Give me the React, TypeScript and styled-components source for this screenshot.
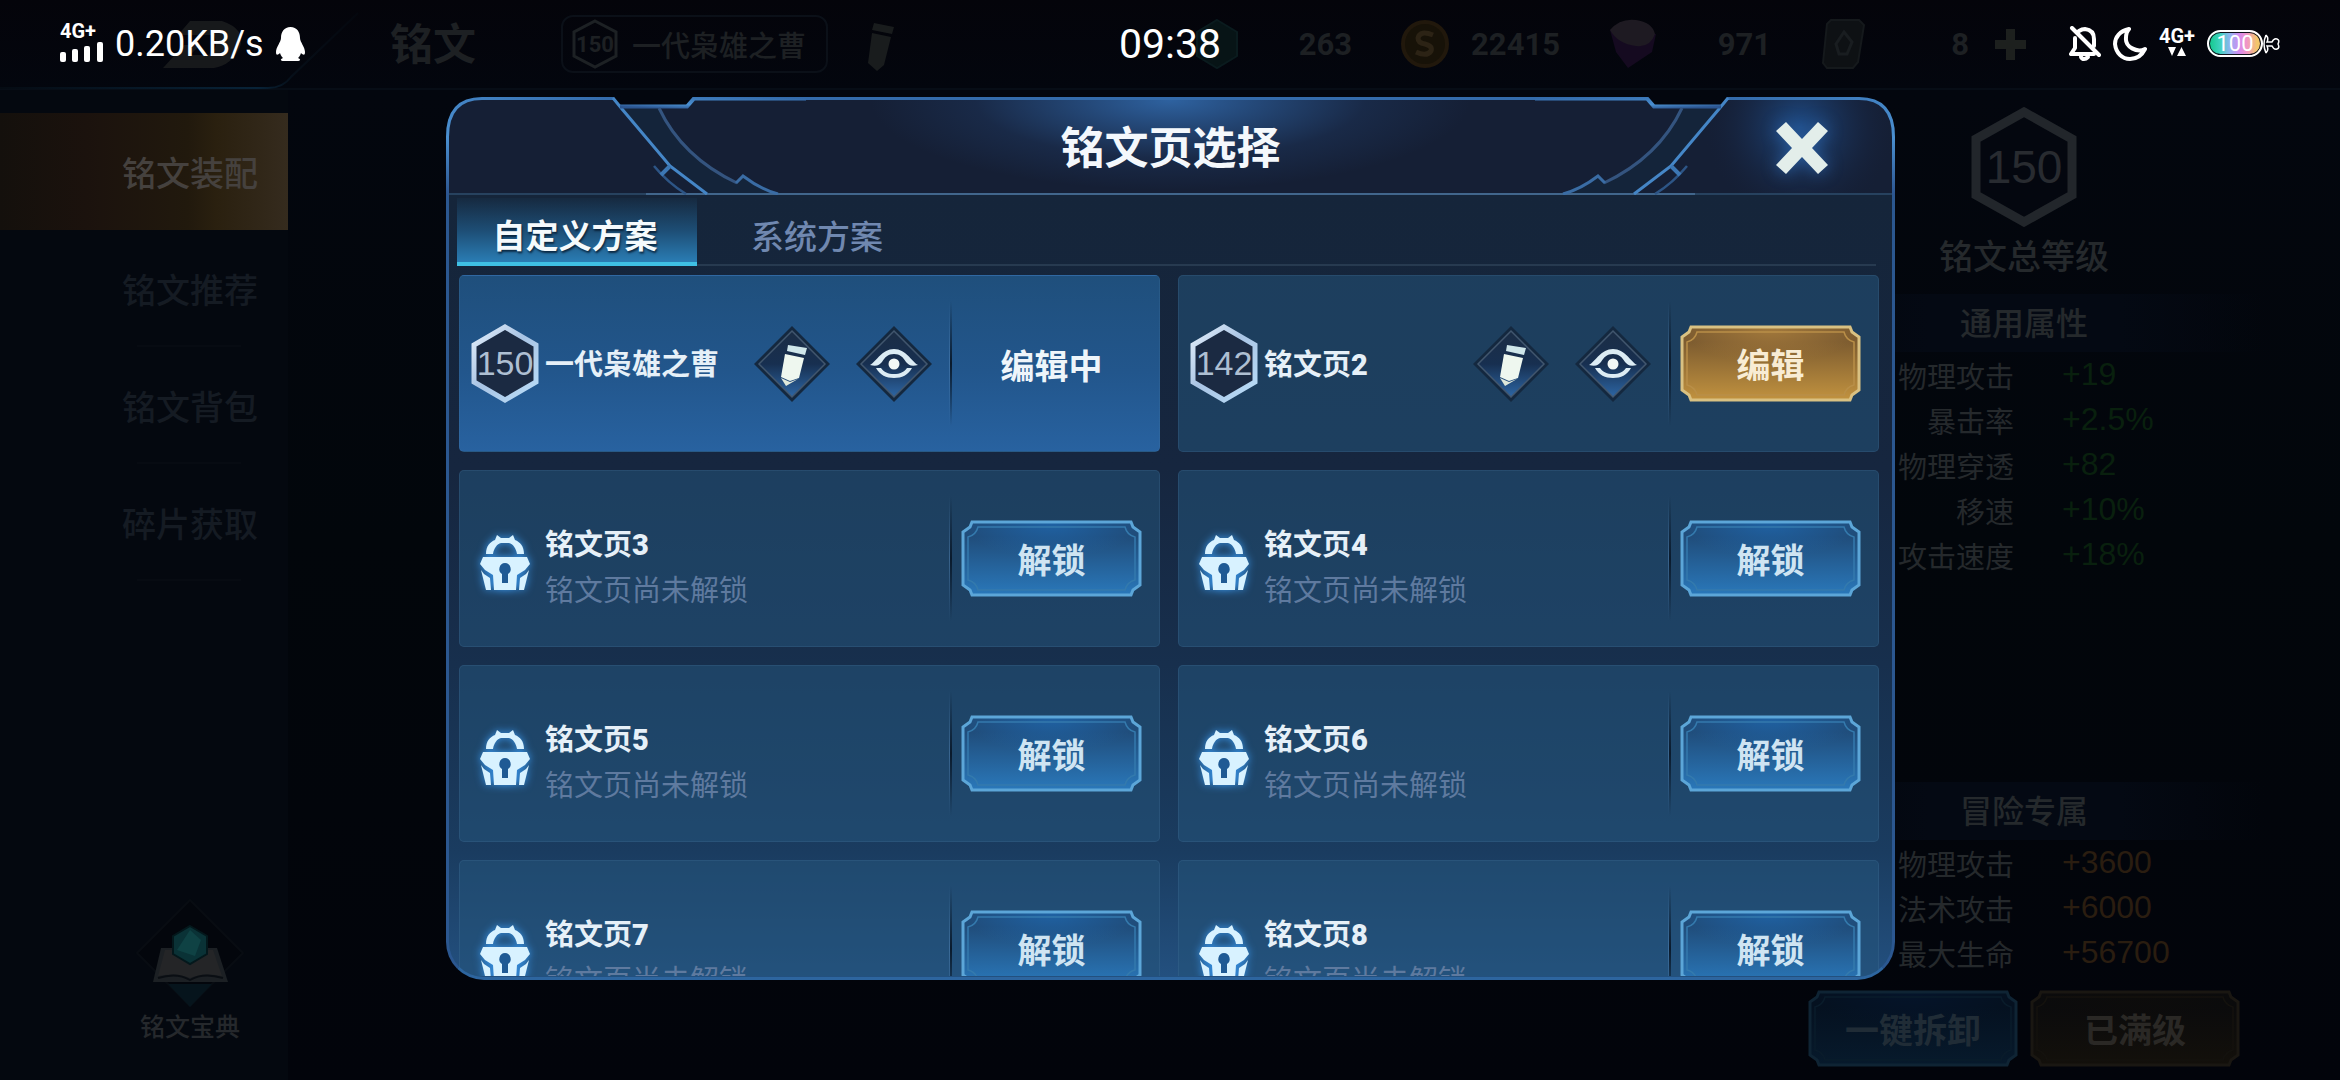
import React from "react";
import styled, { createGlobalStyle, css } from "styled-components";

const GlobalStyle = createGlobalStyle`
  *, *::before, *::after { box-sizing: border-box; }
  html, body { margin: 0; background: #02050b; }
  body {
    font-family: "Roboto", "Noto Sans CJK SC", sans-serif;
    font-weight: 500;
    color: #fff;
    overflow: hidden;
  }
  button { font: inherit; color: inherit; border: 0; padding: 0; background: none; cursor: pointer; }
  svg { display: block; flex: none; }
  ul, dl, dd, h1, h2, p { margin: 0; padding: 0; list-style: none; font-weight: inherit; }
`;

/* ---------- game page behind the dialog ---------- */

const Page = styled.div`
  position: relative;
  min-height: 100vh;
  display: flex;
  flex-direction: column;
  background: linear-gradient(180deg, #04040a 0, #03060e 90px, #02060b 50%, #02040b 100%);
`;

const TopBar = styled.header`
  height: 90px;
  display: flex;
  align-items: center;
  padding-right: 314px;
  border-bottom: 2px solid #070d16;
  color: #1d2023;
`;

const BackButton = styled.button`
  width: 370px;
  height: 90px;
`;

const PageTitle = styled.h1`
  width: 191px;
  padding: 2px 0 0 20px;
  font-size: 43px;
  line-height: 58px;
  font-weight: 700;
`;

const PlanTag = styled.div`
  width: 267px;
  height: 58px;
  display: flex;
  align-items: center;
  gap: 14px;
  padding-left: 9px;
  border: 2px solid #0b1018;
  border-radius: 12px;
  font-size: 29px;
`;

const RenameButton = styled.button`
  margin: 10px 0 0 36px;
`;

const Resources = styled.ul`
  margin-left: auto;
  display: flex;
  gap: 48px;
`;

const Resource = styled.li<{ $width: number }>`
  width: ${(p) => p.$width}px;
  height: 58px;
  display: flex;
  align-items: center;
  justify-content: space-between;
  font-size: 31px;
  font-weight: 700;
`;

const AddButton = styled.button`
  margin-left: 26px;
`;

const Main = styled.main`
  flex: 1;
  display: flex;
  justify-content: space-between;
`;

const SideNav = styled.nav`
  width: 288px;
  display: flex;
  flex-direction: column;
  padding: 23px 0 32px;
  background: #04080f;
`;

const NavItem = styled.button<{ $active?: boolean }>`
  height: 117px;
  padding-right: 30px;
  text-align: right;
  font-size: 34px;
  color: ${(p) => (p.$active ? "#45413e" : "#151b23")};
  background: ${(p) =>
    p.$active
      ? "linear-gradient(90deg, #14100c 0, #1b120d 30%, #21190d 65%, #2a200f 75%, #352b1e 100%)"
      : "linear-gradient(#070b12, #070b12) 137px 100% / 104px 2px no-repeat"};
`;

const Codex = styled.button`
  margin: auto 0 0 92px;
  display: flex;
  flex-direction: column;
  align-items: center;
  font-size: 25px;
  line-height: 40px;
  color: #25282c;
`;

const StatsPanel = styled.aside`
  width: 632px;
  display: flex;
  flex-direction: column;
  align-items: center;
  padding: 17px 0 13px;
  color: #25292c;
`;

const TotalLevel = styled.div`
  display: grid;
  place-items: center;
  font-family: "Liberation Sans", sans-serif;
  font-weight: 400;
  font-size: 46px;
  color: #282b30;

  > * { grid-area: 1 / 1; }
`;

const TotalLabel = styled.p`
  margin: 6px 0 13px;
  font-size: 34px;
  line-height: 48px;
`;

const StatGroup = styled.section<{ $bottom?: boolean }>`
  width: 100%;
  ${(p) => p.$bottom && css`margin-top: auto;`}
`;

const StatHeading = styled.h2`
  margin: 0 76px;
  height: 58px;
  font-size: 32px;
  line-height: 60px;
  text-align: center;
  background: linear-gradient(90deg, transparent, #040913 30%, #040913 70%, transparent);
`;

const StatRow = styled.div`
  display: grid;
  grid-template-columns: 306px 1fr;
  column-gap: 48px;
  height: 45px;
  align-items: center;
  font-size: 29px;
  font-weight: 400;

  dt { text-align: right; }
`;

const StatValue = styled.dd<{ $tone: "green" | "orange" }>`
  font-family: "Liberation Sans", sans-serif;
  font-size: 32px;
  color: ${(p) => (p.$tone === "green" ? "#09200e" : "#2a1d10")};
`;

const PanelActions = styled.div`
  display: flex;
  gap: 12px;
  margin-top: 15px;
`;

/* ---------- dialog ---------- */

const Overlay = styled.div`
  position: absolute;
  inset: 0;
  display: flex;
  padding: 97px 445px 100px 446px;
`;

const Dialog = styled.section`
  flex: 1;
  min-width: 0;
  display: flex;
  flex-direction: column;
`;

const DialogHeader = styled.header`
  flex: none;
  height: 98px;
  display: flex;
`;

const HeaderSide = styled.div`
  position: relative;
  width: 360px;
  display: flex;
  justify-content: flex-end;
  align-items: center;
  padding: 4px 67px 0 0;
`;

const HeaderArt = styled.svg<{ $flip?: boolean }>`
  position: absolute;
  inset: 0;
  ${(p) => p.$flip && css`transform: scaleX(-1);`}
`;

const HeaderCenter = styled.div`
  flex: 1;
  display: flex;
  align-items: center;
  justify-content: center;
  padding-top: 5px;
  border-top: 3px solid #346bab;
  border-bottom: 2px solid #41668c;
  background:
    radial-gradient(ellipse 300px 90px at 50% 0, #2e62a0 0, rgba(42, 88, 146, 0.7) 30%, rgba(34, 66, 114, 0.3) 65%, rgba(21, 31, 53, 0) 100%),
    #151f35;
`;

const DialogTitle = styled.h2`
  font-size: 44px;
  line-height: 60px;
  font-weight: 700;
  color: #f4f8fc;
`;

const CloseButton = styled.button`
  position: relative;
  filter: drop-shadow(0 0 8px #2a5c9c);
`;

const DialogBody = styled.div`
  flex: 1;
  min-height: 0;
  display: flex;
  flex-direction: column;
  padding: 3px 13px 1px 10px;
  border: 3px solid #2b5790;
  border-top: 0;
  border-bottom-color: #2d659f;
  border-radius: 0 0 38px 38px;
  overflow: hidden;
  background: linear-gradient(180deg, #15253a 0, #16263f 35%, #172f4d 60%, #1a3c60 84%, #23507f 100%);
`;

const Tabs = styled.div`
  flex: none;
  display: flex;
  height: 68px;
  margin: 0 3px 9px -2px;
  background: linear-gradient(#273a50, #273a50) 0 66px / 100% 2px no-repeat;
`;

const Tab = styled.button<{ $active?: boolean }>`
  width: 240px;
  padding-top: 5px;
  font-size: 33px;
  color: ${(p) => (p.$active ? "#f5fafc" : "#7088b0")};
  ${(p) =>
    p.$active &&
    css`
      padding: 7px 4px 0 0;
      font-weight: 700;
      border-bottom: 4px solid #3fc0e4;
      background: linear-gradient(180deg, rgba(30, 80, 115, 0.1) 0, #1d4d74 50%, #2a7db4 100%);
      text-shadow: 1px 2px 2px rgba(5, 25, 45, 0.8);
    `}
`;

const PlanList = styled.ul`
  flex: 1;
  min-height: 0;
  overflow: hidden;
  display: grid;
  grid-template-columns: 1fr 1fr;
  grid-auto-rows: 177px;
  gap: 18px;
`;

const PlanCard = styled.li<{ $current?: boolean }>`
  display: flex;
  align-items: center;
  padding: 0 17px 0 11px;
  border: 1px solid rgba(80, 130, 170, 0.2);
  border-radius: 5px;
  background: ${(p) =>
    p.$current ? "linear-gradient(180deg, #1f4f7c 0, #22568c 55%, #2862a0 100%)" : "rgba(37, 83, 122, 0.55)"};
`;

const Emblem = styled.div<{ $locked?: boolean }>`
  flex: none;
  width: 68px;
  margin-right: 6px;
  padding-top: ${(p) => (p.$locked ? 10 : 0)}px;
  display: grid;
  place-items: center;
  font-family: "Liberation Sans", sans-serif;
  font-weight: 400;
  font-size: 34px;
  color: #aebfd2;

  > * { grid-area: 1 / 1; }
`;

const GlowSvg = styled.svg`
  filter: drop-shadow(0 0 4px #3b9cf5);
`;

const PlanText = styled.div<{ $locked?: boolean }>`
  flex: 1;
  min-width: 0;
  white-space: nowrap;
  padding-top: ${(p) => (p.$locked ? 18 : 3)}px;
  font-size: 29px;
  line-height: 46px;
`;

const PlanName = styled.p`
  font-weight: 700;
  color: #e6f0f8;

  b { font-weight: 900; }
`;

const PlanNote = styled.p`
  font-weight: 400;
  color: #5f7a9f;
`;

const DiamondButtons = styled.div`
  flex: none;
  display: flex;
  gap: 24px;
  margin-right: 16px;
`;

const Divider = styled.i`
  flex: none;
  width: 3px;
  height: 125px;
  margin-right: 9px;
  background:
    linear-gradient(180deg, transparent, rgba(90, 140, 190, 0.45), transparent) 0 0 / 1px 100% no-repeat,
    linear-gradient(180deg, transparent, #0a1a2c 50%, transparent) 1px 0 / 2px 100% no-repeat;
`;

const Editing = styled.p`
  flex: none;
  width: 181px;
  padding-top: 2px;
  text-align: center;
  font-size: 34px;
  font-weight: 700;
  color: #eef5fa;
`;

type Tone = "gold" | "blue" | "dimBlue" | "dimGold";

const labelColor: Record<Tone, string> = {
  gold: "#f8ecd4",
  blue: "#cfe4f2",
  dimBlue: "#202c36",
  dimGold: "#2a2825",
};

const PlaqueButton = styled.button<{ $width: number; $tone: Tone }>`
  flex: none;
  display: grid;
  place-items: center;
  width: ${(p) => p.$width}px;
  height: 77px;
  font-size: 34px;
  font-weight: 700;
  color: ${(p) => labelColor[p.$tone]};

  > * { grid-area: 1 / 1; }
`;

/* ---------- phone status bar ---------- */

const StatusBar = styled.div`
  position: absolute;
  top: 0;
  left: 0;
  right: 0;
  height: 87px;
  display: grid;
  grid-template-columns: 1fr auto 1fr;
  align-items: center;
  padding: 0 60px;
  font-weight: 400;
`;

const StatusGroup = styled.div<{ $end?: boolean }>`
  display: flex;
  align-items: center;
  gap: 12px;
  justify-content: ${(p) => (p.$end ? "flex-end" : "flex-start")};
  font-size: 36px;
`;

const Network = styled.div`
  display: flex;
  flex-direction: column;
  align-items: flex-start;
  gap: 1px;
  padding-bottom: 5px;
  font-size: 20px;
  line-height: 20px;
  font-weight: 700;
`;

const Clock = styled.time`
  font-size: 41px;
`;

const Battery = styled.div`
  display: flex;
  align-items: center;
`;

const BatteryPill = styled.div`
  width: 56px;
  height: 27px;
  display: grid;
  place-items: center;
  border: 2px solid #fff;
  border-radius: 14px;
  box-shadow: inset 0 0 0 1px #10131c;
  background: linear-gradient(90deg, #12c98a 0, #3fd2c0 22%, #8fb4f0 40%, #d58af0 58%, #f094c8 72%, #f3c66a 92%);
  font-size: 22px;
  line-height: 22px;
`;

/* ---------- drawings ---------- */

function BigHexagon() {
  return (
    <svg width="106" height="120" viewBox="0 0 106 120" aria-hidden="true">
      <path d="M53 5 101 32V88L53 115 5 88V32Z" fill="#04070f" stroke="#22262b" strokeWidth="9" />
    </svg>
  );
}

function Hexagon() {
  return (
    <svg width="68" height="79" viewBox="0 0 68 79" aria-hidden="true">
      <defs>
        <linearGradient id="hexEdge" x1="0" y1="0" x2="1" y2="1">
          <stop offset="0" stopColor="#e4effa" />
          <stop offset=".45" stopColor="#a9c4e4" />
          <stop offset="1" stopColor="#b9ddf8" />
        </linearGradient>
      </defs>
      <path d="M34 3 65 21V58L34 76 3 58V21Z" fill="#1b2a42" stroke="url(#hexEdge)" strokeWidth="5" />
    </svg>
  );
}

function LockIcon() {
  return (
    <GlowSvg width="68" height="75" viewBox="-9 -9 68 75" aria-hidden="true">
      <g fill="#d8f2ff">
        <path d="M6 19C6 11 10 7 15 5L17 0 21 3H29L33 0 35 5C40 7 44 11 44 19H37C36 13 33 9 29 8H21C17 9 14 13 13 19Z" />
        <path d="M3 22H47L50 29 45 35 37 40 36 55H14L13 40 5 35 0 29Z" />
        <path d="M1 35 4 39 10 43 11 55H6Z" />
        <path d="M49 35 46 39 40 43 39 55H44Z" />
      </g>
      <path d="M25 28A6 6 0 0 0 22 39L22 48H28L28 39A6 6 0 0 0 25 28Z" fill="#1f5a94" />
    </GlowSvg>
  );
}

function DiamondBase() {
  return (
    <>
      <defs>
        <linearGradient id="diamond" x1="0" y1="0" x2="0" y2="1">
          <stop offset="0" stopColor="#1b2d45" />
          <stop offset=".5" stopColor="#172f50" />
          <stop offset="1" stopColor="#2d66a4" />
        </linearGradient>
      </defs>
      <path d="M39 1 77 39 39 77 1 39Z" fill="#14283f" />
      <path d="M39 6 72 39 39 72 6 39Z" fill="url(#diamond)" stroke="#41566e" strokeWidth="1.5" />
    </>
  );
}

function RenameIcon() {
  return (
    <svg width="78" height="78" viewBox="0 0 78 78" aria-hidden="true">
      <DiamondBase />
      <path d="M35 20 54 23 52 30 34 26Z" fill="#cfe6ea" />
      <path d="M32 29 51 33 46 53 37 56 28 52Z" fill="#eef7ef" />
      <path d="M28 53 37 57 45 54 33 61Z" fill="#dfe8da" />
    </svg>
  );
}

function ViewIcon() {
  return (
    <svg width="78" height="78" viewBox="0 0 78 78" aria-hidden="true">
      <DiamondBase />
      <path d="M15 40C22 36 27 24 39 24S56 36 63 40C56 42 54 40 51 37 48 32 45 29 39 29S30 32 27 37C24 40 22 42 15 40Z" fill="#dcecf4" />
      <path d="M21 43H26C29 47 33 49 39 49S49 47 52 43H57C53 50 47 53 39 53S25 50 21 43Z" fill="#dcecf4" />
      <circle cx="39" cy="39" r="5.5" fill="#f2f8f6" />
    </svg>
  );
}

function PlaqueArt({ width, tone }: { width: number; tone: Tone }) {
  const w = width;
  const palettes: Record<Tone, { top: string; bottom: string; line: string; inner: string; glow: string }> = {
    gold: { top: "#7d5c30", bottom: "#c1923f", line: "#d9c182", inner: "#b98f48", glow: "#a3793c" },
    blue: { top: "#204d7b", bottom: "#2a78ba", line: "#5ca6d8", inner: "#347aad", glow: "#1f62a4" },
    dimBlue: { top: "#051120", bottom: "#071a2c", line: "#0f2434", inner: "#0a1c2b", glow: "#05142a" },
    dimGold: { top: "#0b0b0c", bottom: "#13100b", line: "#1a1712", inner: "#14120e", glow: "#0d0c0b" },
  };
  const c = palettes[tone];
  const id = `plaque-${tone}`;
  const outline = `M11 2H${w - 11}L${w - 9} 7 ${w - 2} 12V65L${w - 9} 70 ${w - 11} 75H11L9 70 2 65V12L9 7Z`;
  return (
    <svg width={w} height="77" viewBox={`0 0 ${w} 77`} aria-hidden="true">
      <defs>
        <linearGradient id={id} x1="0" y1="0" x2="0" y2="1">
          <stop offset="0" stopColor={c.top} />
          <stop offset=".2" stopColor={c.top} />
          <stop offset="1" stopColor={c.bottom} />
        </linearGradient>
        <radialGradient id={`${id}-glow`} cx=".5" cy="0" r=".5">
          <stop offset="0" stopColor={c.glow} />
          <stop offset="1" stopColor={c.glow} stopOpacity="0" />
        </radialGradient>
      </defs>
      <path d={outline} fill={`url(#${id})`} />
      <path d={outline} fill={`url(#${id}-glow)`} stroke={c.line} strokeWidth="3" />
      <path
        d={`M17 7H${w - 17}Q${w - 15} 15 ${w - 7} 17V60Q${w - 15} 62 ${w - 17} 70H17Q15 62 7 60V17Q15 15 17 7Z`}
        fill="none"
        stroke={c.inner}
        strokeWidth="1.5"
      />
    </svg>
  );
}

function Plaque({ width, tone, children }: { width: number; tone: Tone; children: string }) {
  return (
    <PlaqueButton type="button" $width={width} $tone={tone}>
      <PlaqueArt width={width} tone={tone} />
      <span>{children}</span>
    </PlaqueButton>
  );
}

function SideArt({ flip }: { flip?: boolean }) {
  const id = flip ? "sideR" : "sideL";
  return (
    <HeaderArt $flip={flip} width="360" height="98" viewBox="0 0 360 98" aria-hidden="true">
      <defs>
        <linearGradient id={`${id}-line`} x1="0" y1="1" x2="1" y2="0">
          <stop offset="0" stopColor="#2c5590" />
          <stop offset=".3" stopColor="#4a8fd0" />
          <stop offset="1" stopColor="#346bab" />
        </linearGradient>
        <radialGradient id={`${id}-glow`} gradientUnits="userSpaceOnUse" cx="95" cy="30" r="95">
          <stop offset="0" stopColor="#1f4d88" />
          <stop offset="1" stopColor="#16203a" stopOpacity="0" />
        </radialGradient>
      </defs>
      <path d="M0 98V40Q0 0 40 0H168L174 9H241L248 0H360V98Z" fill="#151f35" />
      <path d="M168 2 224 68 262 96H332L297 80 291 86Q240 60 213 10H174Z" fill="#14243a" />
      {flip && <path d="M2 96V40Q2 2 40 2H168L224 68 260 96Z" fill={`url(#${id}-glow)`} />}
      <path d="M1 97H200" stroke="#27425f" strokeWidth="2" />
      <path d="M200 97H360" stroke="#41668c" strokeWidth="2" />
      <g fill="none" stroke={`url(#${id}-line)`}>
        <path d="M1.5 98V40Q1.5 1.500 36 1.500H168" strokeWidth="3" />
        <path d="M167 1 176 12 224 69 261 97" strokeWidth="3" />
        <path d="M174 9.500H241L248 1.500H360" strokeWidth="4" />
        <path d="M208 69Q222 86 240 97" stroke="#2d5586" strokeWidth="2.500" />
        <path d="M215 78 224 69" stroke="#3c77b4" strokeWidth="4" />
        <path d="M213 11Q236 60 291 86" stroke="#34547f" strokeWidth="3" />
        <path d="M290 86 297 79Q314 92 332 97" stroke="#3a6ca4" strokeWidth="3" />
      </g>
    </HeaderArt>
  );
}

function BackArt() {
  return (
    <svg width="370" height="90" viewBox="0 0 370 90" aria-hidden="true">
      <defs>
        <linearGradient id="backEdge" x1="0" y1="0" x2="1" y2="0">
          <stop offset="0" stopColor="#050b13" />
          <stop offset=".72" stopColor="#082338" />
          <stop offset=".82" stopColor="#060e18" />
          <stop offset="1" stopColor="#04070e" />
        </linearGradient>
      </defs>
      <path d="M0 89H268Q283 89 291 78L358 14" fill="none" stroke="url(#backEdge)" strokeWidth="2" />
      <path d="M163 69 184 46H200L190 56H208Q220 50 214 36H178L190 22H222Q246 30 240 48 232 66 214 69Z" fill="#17191b" />
    </svg>
  );
}

function TagHexagon() {
  return (
    <svg width="46" height="50" viewBox="0 0 46 50" aria-hidden="true">
      <path d="M23 2 44 13V37L23 48 2 37V13Z" fill="none" stroke="#1d2124" strokeWidth="3" />
    </svg>
  );
}

const TagLevel = styled.div`
  display: grid;
  place-items: center;
  font-size: 22px;
  font-weight: 700;

  > * { grid-area: 1 / 1; }
`;

function CodexArt() {
  return (
    <svg width="110" height="110" viewBox="0 0 110 110" aria-hidden="true">
      <path d="M55 2 108 55 55 108 2 55Z" fill="#03060c" stroke="#080c12" strokeWidth="2" />
      <path d="M33 86H77L55 109Z" fill="#06141c" />
      <path d="M26 50H82L93 84H18Z" fill="#1c2024" />
      <path d="M30 52H78L87 78Q70 74 55 80 40 74 23 78Z" fill="#242527" />
      <path d="M23 80Q42 74 55 82 68 74 88 80" fill="none" stroke="#0a0e13" strokeWidth="2" />
      <path d="M55 28 72 38V56L55 66 38 56V38Z" fill="#0a3236" stroke="#04181c" strokeWidth="2" />
      <path d="M55 32 66 42 60 58 42 52Z" fill="#0f4244" />
    </svg>
  );
}

function SignalBars() {
  return (
    <svg width="43" height="20" viewBox="0 0 43 20" fill="#fff" aria-hidden="true">
      <rect x="0" y="10" width="6" height="10" rx="2" />
      <rect x="12" y="7" width="6" height="13" rx="2" />
      <rect x="24" y="4" width="6" height="16" rx="2" />
      <rect x="37" y="0" width="6" height="20" rx="2" />
    </svg>
  );
}

function PenguinIcon() {
  return (
    <svg width="29" height="34" viewBox="0 0 29 34" fill="#fff" aria-hidden="true">
      <path d="M14.500 0C8 0 5 5 5 11 5 15 0 20 0 25 0 29 2 28 4 26 5 29 6 30 7 31 4 32 4 34 8 34H21C25 34 25 32 22 31 23 30 24 29 25 26 27 28 29 29 29 25 29 20 24 15 24 11 24 5 21 0 14.500 0Z" />
    </svg>
  );
}

function MutedBell() {
  return (
    <svg width="32" height="36" viewBox="0 0 32 36" fill="none" stroke="#fff" strokeWidth="4" strokeLinejoin="round" strokeLinecap="round" aria-hidden="true">
      <path d="M6 12V22L2 28H25M10 5Q13 3 16 3 25 4 25 13V20" />
      <path d="M3 2 30 29" />
      <path d="M12 31Q13 33 15 33T19 31" />
    </svg>
  );
}

function MoonIcon() {
  return (
    <svg width="34" height="34" viewBox="0 0 34 34" fill="none" stroke="#fff" strokeWidth="4" strokeLinejoin="round" aria-hidden="true">
      <path d="M16 2C7 4 2 10 2 17 3 26 9 32 17 32 24 32 29 28 32 22 24 26 12 20 13 11 13 7 14 4 16 2Z" />
    </svg>
  );
}

function DataArrows() {
  return (
    <svg width="36" height="10" viewBox="0 0 36 10" fill="#fff" aria-hidden="true">
      <path d="M9 0H17L13 9ZM18 9H27L22.500 0Z" />
    </svg>
  );
}

function FishTail() {
  return (
    <svg width="17" height="20" viewBox="0 0 17 20" fill="none" stroke="#fff" strokeWidth="1.5" aria-hidden="true">
      <path d="M3 1Q-1 10 3 19M3 1Q6 4 4 8H9Q11 4 14 5 17 6 15 10 17 14 14 15 11 16 9 12H4Q6 16 3 19" />
    </svg>
  );
}

/* ---------- data ---------- */

type Plan = { name: string; digit?: string; level?: number; state: "current" | "open" | "locked" };

const plans: Plan[] = [
  { name: "一代枭雄之曹", level: 150, state: "current" },
  { name: "铭文页", digit: "2", level: 142, state: "open" },
  ...["3", "4", "5", "6", "7", "8"].map((digit): Plan => ({ name: "铭文页", digit, state: "locked" })),
];

const commonStats = [
  ["物理攻击", "+19"],
  ["暴击率", "+2.5%"],
  ["物理穿透", "+82"],
  ["移速", "+10%"],
  ["攻击速度", "+18%"],
];

const adventureStats = [
  ["物理攻击", "+3600"],
  ["法术攻击", "+6000"],
  ["最大生命", "+56700"],
];

function PlanRow({ plan }: { plan: Plan }) {
  const locked = plan.state === "locked";
  return (
    <PlanCard $current={plan.state === "current"}>
      <Emblem $locked={locked}>
        {locked ? (
          <LockIcon />
        ) : (
          <>
            <Hexagon />
            <span>{plan.level}</span>
          </>
        )}
      </Emblem>
      <PlanText $locked={locked}>
        <PlanName>
          {plan.name}
          {plan.digit && <b>{plan.digit}</b>}
        </PlanName>
        {locked && <PlanNote>铭文页尚未解锁</PlanNote>}
      </PlanText>
      {!locked && (
        <DiamondButtons>
          <button type="button" aria-label="重命名">
            <RenameIcon />
          </button>
          <button type="button" aria-label="查看">
            <ViewIcon />
          </button>
        </DiamondButtons>
      )}
      <Divider />
      {plan.state === "current" && <Editing>编辑中</Editing>}
      {plan.state === "open" && (
        <Plaque width={181} tone="gold">
          编辑
        </Plaque>
      )}
      {locked && (
        <Plaque width={181} tone="blue">
          解锁
        </Plaque>
      )}
    </PlanCard>
  );
}

function Stats({ title, rows, tone, bottom }: { title: string; rows: string[][]; tone: "green" | "orange"; bottom?: boolean }) {
  return (
    <StatGroup $bottom={bottom}>
      <StatHeading>{title}</StatHeading>
      <dl>
        {rows.map(([label, value]) => (
          <StatRow key={label}>
            <dt>{label}</dt>
            <StatValue $tone={tone}>{value}</StatValue>
          </StatRow>
        ))}
      </dl>
    </StatGroup>
  );
}

export default function App() {
  return (
    <>
      <GlobalStyle />
      <Page>
        <TopBar>
          <BackButton type="button" aria-label="返回">
            <BackArt />
          </BackButton>
          <PageTitle>铭文</PageTitle>
          <PlanTag>
            <TagLevel>
              <TagHexagon />
              <span>150</span>
            </TagLevel>
            一代枭雄之曹
          </PlanTag>
          <RenameButton type="button" aria-label="重命名">
            <svg width="32" height="56" viewBox="0 0 32 56" aria-hidden="true">
              <path d="M10 2 30 6 28 13 8 9ZM8 12 27 16 20 44 13 50 4 42Z" fill="#191c1d" />
            </svg>
          </RenameButton>
          <Resources>
            <Resource $width={160}>
              <svg width="50" height="52" viewBox="0 0 50 52" aria-hidden="true">
                <path d="M25 2 45 14V38L25 50 5 38V14Z" fill="#071416" stroke="#0a1b1e" strokeWidth="2" />
              </svg>
              263
            </Resource>
            <Resource $width={160}>
              <svg width="50" height="52" viewBox="0 0 50 52" aria-hidden="true">
                <circle cx="25" cy="26" r="22" fill="#171208" stroke="#21180c" strokeWidth="4" />
                <path d="M33 17Q20 12 18 20 18 25 25 26 33 28 31 33 27 39 16 34" fill="none" stroke="#2c2315" strokeWidth="5" />
              </svg>
              22415
            </Resource>
            <Resource $width={163}>
              <svg width="50" height="52" viewBox="0 0 50 52" aria-hidden="true">
                <path d="M2 12 8 34 20 50 44 34 48 16Z" fill="#150a20" />
                <path d="M2 12Q12 0 28 2 44 4 47 16 42 30 28 28 10 26 2 12Z" fill="#1e1a22" />
              </svg>
              971
            </Resource>
            <Resource $width={150}>
              <svg width="50" height="52" viewBox="0 0 50 52" aria-hidden="true">
                <path d="M12 2H40L45 7 39 44 34 50H8L4 45 8 6Z" fill="#0e1114" stroke="#15191c" strokeWidth="2" />
                <path d="M25 14 33 24 28 36H20L17 26Z" fill="none" stroke="#191d20" strokeWidth="3" />
              </svg>
              8
            </Resource>
          </Resources>
          <AddButton type="button" aria-label="添加">
            <svg width="31" height="31" viewBox="0 0 31 31" aria-hidden="true">
              <path d="M11 0H20V11H31V20H20V31H11V20H0V11H11Z" fill="#1d201e" />
            </svg>
          </AddButton>
        </TopBar>
        <Main>
          <SideNav>
            <NavItem type="button" $active>
              铭文装配
            </NavItem>
            <NavItem type="button">铭文推荐</NavItem>
            <NavItem type="button">铭文背包</NavItem>
            <NavItem type="button">碎片获取</NavItem>
            <Codex type="button">
              <CodexArt />
              铭文宝典
            </Codex>
          </SideNav>
          <StatsPanel>
            <TotalLevel>
              <BigHexagon />
              <span>150</span>
            </TotalLevel>
            <TotalLabel>铭文总等级</TotalLabel>
            <Stats title="通用属性" rows={commonStats} tone="green" />
            <Stats title="冒险专属" rows={adventureStats} tone="orange" bottom />
            <PanelActions>
              <Plaque width={210} tone="dimBlue">
                一键拆卸
              </Plaque>
              <Plaque width={210} tone="dimGold">
                已满级
              </Plaque>
            </PanelActions>
          </StatsPanel>
        </Main>

        <Overlay>
          <Dialog role="dialog" aria-label="铭文页选择">
            <DialogHeader>
              <HeaderSide>
                <SideArt />
              </HeaderSide>
              <HeaderCenter>
                <DialogTitle>铭文页选择</DialogTitle>
              </HeaderCenter>
              <HeaderSide>
                <SideArt flip />
                <CloseButton type="button" aria-label="关闭">
                  <svg width="52" height="52" viewBox="0 0 52 52" aria-hidden="true">
                    <path d="M10 0 26 17 42 0 52 9 36 26 52 43 42 52 26 35 10 52 0 43 16 26 0 9Z" fill="#e3eeea" />
                  </svg>
                </CloseButton>
              </HeaderSide>
            </DialogHeader>
            <DialogBody>
              <Tabs role="tablist">
                <Tab type="button" role="tab" aria-selected="true" $active>
                  自定义方案
                </Tab>
                <Tab type="button" role="tab" aria-selected="false">
                  系统方案
                </Tab>
              </Tabs>
              <PlanList>
                {plans.map((plan) => (
                  <PlanRow key={plan.name + (plan.digit ?? "")} plan={plan} />
                ))}
              </PlanList>
            </DialogBody>
          </Dialog>
        </Overlay>

        <StatusBar>
          <StatusGroup>
            <Network>
              4G+
              <SignalBars />
            </Network>
            <span>0.20KB/s</span>
            <PenguinIcon />
          </StatusGroup>
          <Clock>09:38</Clock>
          <StatusGroup $end>
            <MutedBell />
            <MoonIcon />
            <Network>
              4G+
              <DataArrows />
            </Network>
            <Battery>
              <BatteryPill>100</BatteryPill>
              <FishTail />
            </Battery>
          </StatusGroup>
        </StatusBar>
      </Page>
    </>
  );
}
